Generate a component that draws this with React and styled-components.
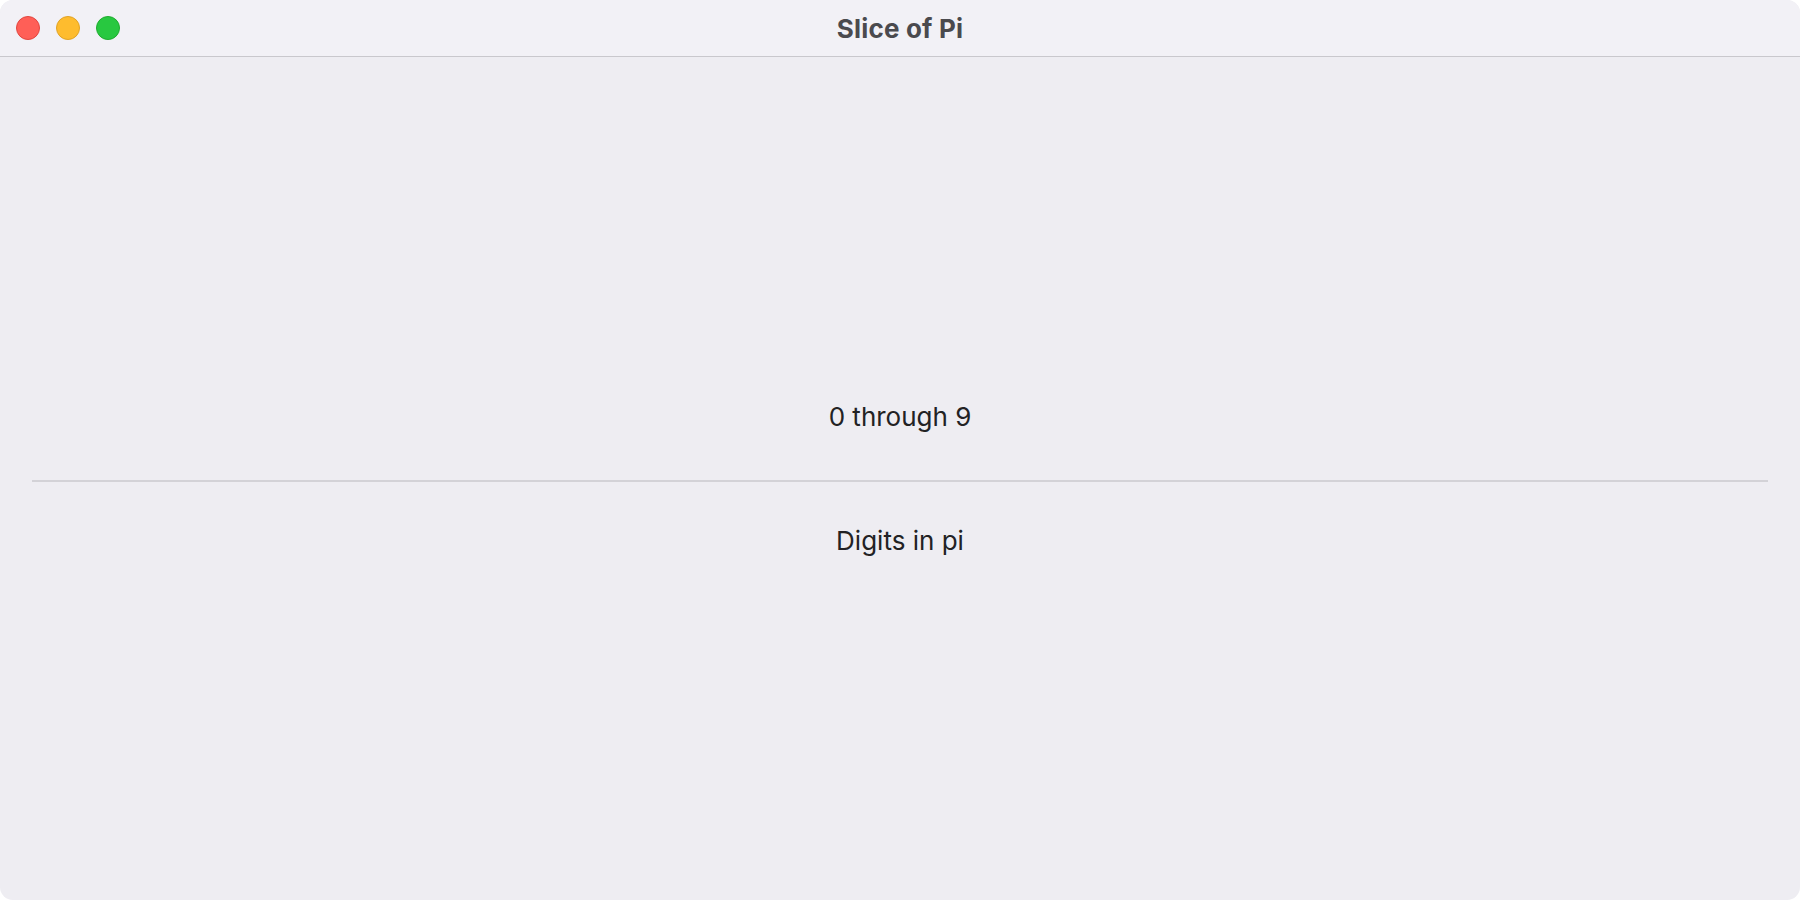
import React from 'react';
import styled, { createGlobalStyle } from 'styled-components';

const GlobalStyle = createGlobalStyle`
  html, body {
    margin: 0;
    padding: 0;
    background: #ffffff;
  }
  body {
    font-family: Inter, "Noto Sans", "Liberation Sans", sans-serif;
    -webkit-font-smoothing: antialiased;
  }
`;

const Window = styled.div`
  width: 1800px;
  height: 900px;
  box-sizing: border-box;
  border-radius: 13px;
  overflow: hidden;
  background: #eeedf2;
  display: flex;
  flex-direction: column;
`;

// Title bar
const TitleBar = styled.div`
  height: 57px;
  flex: none;
  box-sizing: border-box;
  background: #f2f1f6;
  border-bottom: 1px solid #c9c8cd;
  display: grid;
  grid-template-columns: 1fr auto 1fr;
  align-items: center;
  padding: 0 16px;
`;

const Lights = styled.div`
  display: flex;
  gap: 16px;
`;

const Light = styled.span`
  width: 24px;
  height: 24px;
  box-sizing: border-box;
  border-radius: 50%;
  background: ${(p) => p.$fill};
  border: 1px solid ${(p) => p.$edge};
`;

const Title = styled.h1`
  margin: 0;
  font-size: 26px;
  font-weight: 700;
  color: #4a4a4e;
  letter-spacing: 0.2px;
`;

// Content
const Content = styled.div`
  flex: 1;
  display: flex;
  flex-direction: column;
  justify-content: center;
`;

const Label = styled.div`
  text-align: center;
  font-size: 26px;
  line-height: 32px;
  color: #222224;
`;

const Divider = styled.div`
  height: 2px;
  background: #d3d2d7;
  margin: ${(p) => p.$above}px 32px ${(p) => p.$below}px;
`;

const App = () => {
  return (
    <>
      <GlobalStyle />
      <Window>
        <TitleBar>
          <Lights>
            <Light $fill="#ff5f57" $edge="#e2463f" />
            <Light $fill="#febc2e" $edge="#e1a325" />
            <Light $fill="#28c840" $edge="#1fac2e" />
          </Lights>
          <Title>Slice of Pi</Title>
          <div />
        </TitleBar>
        <Content>
          <Label>0 through 9</Label>
          <Divider $above={47} $below={43} />
          <Label>Digits in pi</Label>
        </Content>
      </Window>
    </>
  );
};

export default App;
